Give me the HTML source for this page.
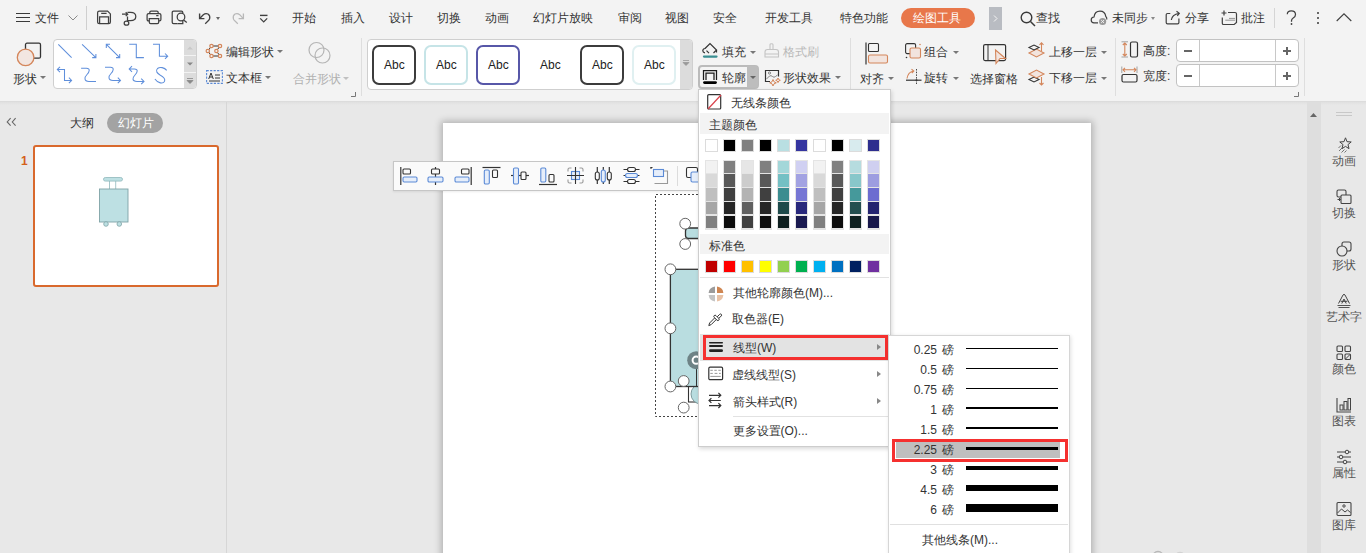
<!DOCTYPE html>
<html><head><meta charset="utf-8">
<style>
*{box-sizing:border-box;margin:0;padding:0}
html,body{width:1366px;height:553px;overflow:hidden;background:#e8e8e8;font-family:"Liberation Sans",sans-serif;color:#333;font-size:12px}
.a{position:absolute}
.t{position:absolute;white-space:nowrap;font-size:12px;line-height:14px}
svg{position:absolute;overflow:visible}
.dd{position:absolute;width:0;height:0;border-left:3px solid transparent;border-right:3px solid transparent;border-top:3px solid #777}
</style></head><body>
<!-- header -->
<div class="a" style="left:0;top:0;width:1366px;height:101px;background:#f3f3f3"></div>
<div class="a" style="left:0;top:101px;width:1366px;height:1px;background:#dcdcdc"></div>
<div class="a" style="left:0;top:102px;width:1366px;height:3px;background:linear-gradient(#e0e0e0,#e8e8e8)"></div>

<!-- hamburger -->
<div class="a" style="left:16px;top:13px;width:14px;height:1.4px;background:#3a3a3a"></div>
<div class="a" style="left:16px;top:17px;width:14px;height:1.4px;background:#3a3a3a"></div>
<div class="a" style="left:16px;top:21px;width:14px;height:1.4px;background:#3a3a3a"></div>
<div class="t" style="left:35px;top:11px;font-size:12px">文件</div>
<svg style="left:68px;top:15px" width="10" height="6"><path d="M0.5 0.5 L5 5 L9.5 0.5" fill="none" stroke="#8a8a8a" stroke-width="1"/></svg>
<div class="a" style="left:86px;top:6px;width:1px;height:24px;background:#cfcfcf"></div>
<!-- save -->
<svg style="left:96px;top:10px" width="16" height="15" viewBox="0 0 16 15"><path d="M1.6 2.8 Q1.6 1.1 3.3 1.1 L11.6 1.1 L14.4 3.9 L14.4 11.9 Q14.4 13.6 12.7 13.6 L3.3 13.6 Q1.6 13.6 1.6 11.9 Z M3.6 13.6 L3.6 6.8 L12.5 6.8 L12.5 13.6 M5.2 3.3 L10.6 3.3" fill="none" stroke="#404040" stroke-width="1.25"/></svg>
<!-- icon2 -->
<svg style="left:121px;top:10px" width="17" height="16" viewBox="0 0 17 16"><path d="M1 4.2 L6.5 4.2 M4.7 2.3 L6.7 4.2 L4.7 6.1 M6.5 2.3 L9.5 2.3 Q14.8 2.3 14.8 6.4 Q14.8 10.6 9.5 10.6 L6.5 10.6 M6.5 6.5 L6.5 11.5" fill="none" stroke="#404040" stroke-width="1.25"/><ellipse cx="5.5" cy="13.2" rx="2.3" ry="2" fill="none" stroke="#404040" stroke-width="1.25"/></svg>
<!-- print -->
<svg style="left:146px;top:10px" width="16" height="15" viewBox="0 0 16 15"><path d="M3.8 3.5 L3.8 2.5 Q3.8 1.1 5.2 1.1 L10.8 1.1 Q12.2 1.1 12.2 2.5 L12.2 3.5 M3.3 10.8 L2.5 10.8 Q1.1 10.8 1.1 9.4 L1.1 5 Q1.1 3.5 2.6 3.5 L13.4 3.5 Q14.9 3.5 14.9 5 L14.9 9.4 Q14.9 10.8 13.5 10.8 L12.7 10.8 M3.3 8.5 L12.7 8.5 L12.7 12.2 Q12.7 13.6 11.3 13.6 L4.7 13.6 Q3.3 13.6 3.3 12.2 Z M10.2 5.6 L12.5 5.6" fill="none" stroke="#404040" stroke-width="1.25"/></svg>
<!-- preview -->
<svg style="left:171px;top:10px" width="17" height="15" viewBox="0 0 17 15"><path d="M6.5 13.6 L2.6 13.6 Q1.2 13.6 1.2 12.2 L1.2 2.5 Q1.2 1.1 2.6 1.1 L10.4 1.1 Q11.8 1.1 11.8 2.5 L11.8 3 M12.3 9.8 L15.8 12.6" fill="none" stroke="#404040" stroke-width="1.25"/><circle cx="10" cy="7" r="3.8" fill="#f3f3f3" stroke="#404040" stroke-width="1.25"/><path d="M6.5 13.6 L11.8 13.6 L11.8 11" fill="none" stroke="#404040" stroke-width="1.25"/></svg>
<!-- undo -->
<svg style="left:198px;top:12px" width="14" height="13" viewBox="0 0 14 13"><path d="M1.6 1.6 L1.6 6.6 L6.4 6.6" fill="none" stroke="#404040" stroke-width="1.4"/><path d="M1.9 6.3 L5.3 2.7 Q7.5 0.9 10 2 Q12.4 3.5 11.6 6.8 Q11.3 7.8 10 9 L7.2 11.7" fill="none" stroke="#404040" stroke-width="1.3"/></svg>
<div class="a" style="left:215.5px;top:17px;width:0;height:0;border-left:2.8px solid transparent;border-right:2.8px solid transparent;border-top:3.2px solid #666"></div>
<svg style="left:231px;top:12px" width="14" height="13" viewBox="0 0 14 13"><path d="M12.4 1.6 L12.4 6.6 L7.6 6.6" fill="none" stroke="#b8b8b8" stroke-width="1.3"/><path d="M12.1 6.3 L8.7 2.7 Q6.5 0.9 4 2 Q1.6 3.5 2.4 6.8 Q2.7 7.8 4 9 L6.8 11.7" fill="none" stroke="#b8b8b8" stroke-width="1.2"/></svg>
<svg style="left:259px;top:14px" width="10" height="9" viewBox="0 0 10 9"><path d="M1 1.4 L8.5 1.4" stroke="#404040" stroke-width="1.4"/><path d="M1.2 4.4 L4.7 7.9 L8.2 4.4" fill="none" stroke="#404040" stroke-width="1.3"/></svg>
<div class="t" style="left:292px;top:11px">开始</div>
<div class="t" style="left:341px;top:11px">插入</div>
<div class="t" style="left:389px;top:11px">设计</div>
<div class="t" style="left:437px;top:11px">切换</div>
<div class="t" style="left:485px;top:11px">动画</div>
<div class="t" style="left:533px;top:11px">幻灯片放映</div>
<div class="t" style="left:617.5px;top:11px">审阅</div>
<div class="t" style="left:665px;top:11px">视图</div>
<div class="t" style="left:713px;top:11px">安全</div>
<div class="t" style="left:765px;top:11px">开发工具</div>
<div class="t" style="left:839.5px;top:11px">特色功能</div>
<div class="a" style="left:901px;top:8px;width:74px;height:20px;border-radius:10px;background:#e8774a"></div>
<div class="t" style="left:913px;top:11px;color:#fff">绘图工具</div>
<div class="a" style="left:989px;top:7px;width:13px;height:23px;background:#b9bcc2"></div>
<svg style="left:993px;top:15px" width="5" height="7"><path d="M1 0.5 L4 3.5 L1 6.5" fill="none" stroke="#f5f5f5" stroke-width="1"/></svg>
<!-- right side -->
<svg style="left:1020px;top:11px" width="16" height="16" viewBox="0 0 16 16"><circle cx="6.5" cy="6.5" r="5.3" fill="none" stroke="#3a3a3a" stroke-width="1.4"/><path d="M10.5 10.5 L15 15" stroke="#3a3a3a" stroke-width="1.5"/></svg>
<div class="t" style="left:1036px;top:11px">查找</div>
<svg style="left:1090px;top:10px" width="18" height="16" viewBox="0 0 18 16"><path d="M8 12.8 L4 12.8 Q1.2 12.8 1.2 10 Q1.2 7.2 4 7 Q4.8 1.2 10 1.2 Q15 1.2 15.8 6.5 Q17 7.5 16.8 9.5" fill="none" stroke="#404040" stroke-width="1.2"/><circle cx="12.6" cy="11.5" r="3.6" fill="#9a9a9a"/><path d="M11.2 10.1 L14 12.9 M14 10.1 L11.2 12.9" stroke="#f3f3f3" stroke-width="1"/></svg>
<div class="t" style="left:1111.5px;top:11px">未同步</div>
<div class="dd" style="left:1151px;top:17px;border-top-color:#888;border-left-width:2.7px;border-right-width:2.7px"></div>
<svg style="left:1165px;top:10px" width="16" height="15" viewBox="0 0 16 15"><path d="M5.3 3.5 L2.5 3.5 Q1.2 3.5 1.2 4.8 L1.2 12.5 Q1.2 13.8 2.5 13.8 L12.6 13.8 Q13.9 13.8 13.9 12.5 L13.9 8.5 M6.3 10 Q7 4.5 14 3.3 M11.5 1.2 L14.3 3.3 L12.3 6" fill="none" stroke="#404040" stroke-width="1.2"/></svg>
<div class="t" style="left:1185px;top:11px">分享</div>
<svg style="left:1221px;top:10px" width="17" height="16" viewBox="0 0 17 16"><path d="M7 2.5 L14 2.5 Q15.5 2.5 15.5 4 L15.5 12.5 L13.2 14.5 L2.5 14.5 Q1.3 14.5 1.3 13.2 L1.3 7.5 M3 0.5 L3 5.5 M0.5 3 L5.5 3" fill="none" stroke="#404040" stroke-width="1.2"/><path d="M8 8.4 L14 8.4 M4.3 10.2 L14 10.2" stroke="#888" stroke-width="0.9"/></svg>
<div class="t" style="left:1241px;top:11px">批注</div>
<div class="a" style="left:1274px;top:8px;width:1px;height:20px;background:#d5d5d5"></div>
<svg style="left:1286px;top:10px" width="11" height="16" viewBox="0 0 11 16"><path d="M1.3 4.3 Q1.3 0.9 5.3 0.9 Q9.5 0.9 9.5 4.5 Q9.5 6.8 7.2 8 Q5.5 9 5.5 10.8 L5.5 11.8" fill="none" stroke="#404040" stroke-width="1.25"/><circle cx="5.5" cy="14" r="0.9" fill="#404040"/></svg>
<div class="a" style="left:1317px;top:12px;width:2px;height:2px;background:#3a3a3a;border-radius:1px"></div>
<div class="a" style="left:1317px;top:17px;width:2px;height:2px;background:#3a3a3a;border-radius:1px"></div>
<div class="a" style="left:1317px;top:22px;width:2px;height:2px;background:#3a3a3a;border-radius:1px"></div>
<svg style="left:1336px;top:13px" width="16" height="9"><path d="M0.7 8 L8 0.9 L15.3 8" fill="none" stroke="#404040" stroke-width="1.15"/></svg>

<!-- shape button -->
<svg style="left:16px;top:42px" width="26" height="26" viewBox="0 0 26 26"><rect x="9.5" y="1.2" width="15" height="15" rx="1.5" fill="#f3f3f3" stroke="#333" stroke-width="1.3"/><circle cx="9.6" cy="15.4" r="8.3" fill="#f2e6e1" stroke="#d4865b" stroke-width="1.3"/></svg>
<div class="t" style="left:12.5px;top:72px">形状</div>
<div class="dd" style="left:40px;top:76px"></div>
<!-- line gallery -->
<div class="a" style="left:53px;top:39px;width:144px;height:50px;border:1px solid #cfcfcf;border-radius:4px;background:#fff"></div>
<div class="a" style="left:184px;top:40px;width:12px;height:48px;background:#dcdcdc;border-radius:0 3px 3px 0"></div>
<div class="a" style="left:184px;top:55px;width:12px;height:1px;background:#f3f3f3"></div>
<div class="a" style="left:184px;top:72px;width:12px;height:1px;background:#f3f3f3"></div>
<svg style="left:187px;top:46px" width="6" height="4"><path d="M0 3.5 L3 0.5 L6 3.5Z" fill="#c8c8c8"/></svg>
<svg style="left:187px;top:62px" width="6" height="4"><path d="M0 0.5 L3 3.5 L6 0.5Z" fill="#888"/></svg>
<svg style="left:187px;top:78px" width="6" height="6"><path d="M0 0.5 L6 0.5 M0 2.5 L3 5.5 L6 2.5Z" fill="#888" stroke="#888" stroke-width="0.8"/></svg>
<svg style="left:56px;top:43px" width="120" height="44" viewBox="0 0 120 44" fill="none" stroke="#5f8fdb" stroke-width="1.05">
<path d="M2.3 1.3 L15.6 14.6"/>
<path d="M26.1 1.3 L39.9 14.6 M36.2 14.6 L39.9 14.6 L39.9 10.9"/>
<path d="M50.3 1.3 L63.7 14.6 M50.3 5 L50.3 1.3 L54 1.3 M60 14.6 L63.7 14.6 L63.7 10.9"/>
<path d="M73.2 1.3 L80.3 1.3 L80.3 14.6 L87.9 14.6"/>
<path d="M97 1.3 L103.4 1.3 L103.4 13.2 L111.7 13.2 M109 10.5 L111.7 13.2 L109 15.9"/>
<path d="M1.3 26.5 L8.5 26.5 L8.5 37.4 L15.6 37.4 M4 23.8 L1.3 26.5 L4 29.2 M12.9 34.7 L15.6 37.4 L12.9 40.1"/>
<path d="M25.1 25.3 L30.5 25.3 C34.5 25.3 33.5 29 31 31.5 C28.5 34 27.5 38.4 33 38.4 L40 38.4"/>
<path d="M49 24.3 L54.5 24.3 C58.5 24.3 57.5 28 55 30.5 C52.5 33 51.5 37.4 57 37.4 L64.5 37.4 M61.8 34.7 L64.5 37.4 L61.8 40.1"/>
<path d="M73.2 26 L78.5 26 C82.5 26 81.5 29.5 79 32 C76.5 34.5 75.5 38.4 81 38.4 L88 38.4 M76 23.2 L73.2 26 L76 28.8 M85.2 35.6 L88 38.4 L85.2 41.2"/>
<path d="M110.7 27.4 C108.5 24.5 104 23.5 101.5 25.5 C99 28 101.5 30.5 104 32 C108 34 109.5 36 108.5 38.5 C107 41 102 40.5 98.9 36"/>
</svg>
<!-- edit shape / textbox / merge -->
<svg style="left:206px;top:44px" width="17" height="14" viewBox="0 0 17 14"><path d="M5.5 2 L14 2 L10.4 7 L14 12 L5.5 12 L1.8 7 Z" fill="none" stroke="#333" stroke-width="1"/><g fill="#f3f3f3" stroke="#d4865b" stroke-width="1.2"><circle cx="5.5" cy="2" r="1.7"/><circle cx="14" cy="2" r="1.7"/><circle cx="1.8" cy="7" r="1.7"/><circle cx="10.4" cy="7" r="1.7"/><circle cx="5.5" cy="12" r="1.7"/><circle cx="14" cy="12" r="1.7"/></g></svg>
<div class="t" style="left:226px;top:45px">编辑形状</div>
<div class="dd" style="left:277px;top:50px"></div>
<svg style="left:206px;top:70px" width="17" height="14" viewBox="0 0 17 14"><rect x="0.6" y="0.6" width="15.8" height="12.8" fill="none" stroke="#5b8ad6" stroke-width="1.1" stroke-dasharray="2.2 1.3"/><path d="M2.7 9 L5 3 L7.3 9 M3.5 7 L6.5 7 M9 5 L14 5 M9 8 L14 8 M3 11 L14 11" fill="none" stroke="#333" stroke-width="1"/></svg>
<div class="t" style="left:226px;top:71px">文本框</div>
<div class="dd" style="left:265px;top:76px"></div>
<svg style="left:308px;top:41px" width="24" height="24" viewBox="0 0 24 24"><circle cx="8.5" cy="9" r="7.5" fill="none" stroke="#b5b5b5" stroke-width="1.2"/><circle cx="14.5" cy="14.5" r="7.5" fill="none" stroke="#b5b5b5" stroke-width="1.2"/></svg>
<div class="t" style="left:293px;top:72px;color:#b0b0b0">合并形状</div>
<div class="dd" style="left:343px;top:77px;border-top-color:#c0c0c0"></div>
<svg style="left:351px;top:92px" width="5" height="5"><path d="M4.5 0 L4.5 4.5 L0 4.5" fill="none" stroke="#777" stroke-width="1"/></svg>
<div class="a" style="left:361px;top:38px;width:1px;height:58px;background:#dedede"></div>
<!-- style gallery -->
<div class="a" style="left:367px;top:39px;width:326px;height:51px;border:1px solid #cfcfcf;border-radius:4px;background:#fff"></div>
<div class="a" style="left:680px;top:40px;width:12px;height:49px;background:#dcdcdc;border-radius:0 3px 3px 0"></div>
<svg style="left:683px;top:60px" width="6" height="6"><path d="M0 0.5 L6 0.5 M0 2.5 L3 5.5 L6 2.5Z" fill="#999" stroke="#999" stroke-width="0.8"/></svg>
<div class="a" style="left:372px;top:45px;width:44px;height:40px;border:2.2px solid #3c3c3c;border-radius:7px"></div>
<div class="a" style="left:424px;top:45px;width:44px;height:40px;border:2px solid #c6e4e7;border-radius:7px"></div>
<div class="a" style="left:476px;top:45px;width:44px;height:40px;border:2px solid #5757a8;border-radius:7px"></div>
<div class="a" style="left:580px;top:45px;width:44px;height:40px;border:2.2px solid #3c3c3c;border-radius:7px"></div>
<div class="a" style="left:632px;top:45px;width:44px;height:40px;border:2px solid #e0f0f1;border-radius:7px"></div>
<div class="t" style="left:384px;top:58px;font-size:12px;color:#222">Abc</div>
<div class="t" style="left:436px;top:58px;font-size:12px;color:#222">Abc</div>
<div class="t" style="left:488px;top:58px;font-size:12px;color:#222">Abc</div>
<div class="t" style="left:540px;top:58px;font-size:12px;color:#222">Abc</div>
<div class="t" style="left:592px;top:58px;font-size:12px;color:#222">Abc</div>
<div class="t" style="left:644px;top:58px;font-size:12px;color:#222">Abc</div>
<!-- fill / format / outline / effect -->
<svg style="left:701px;top:42px" width="18" height="17" viewBox="0 0 18 17"><path d="M4 6.5 L9 1.5 L15.5 8 L12.5 11 M4 6.5 Q1.8 6.8 1.8 8.8 Q1.8 10.5 4 10.8 M8 11.2 L5.5 8.7" fill="none" stroke="#333" stroke-width="1.2"/><path d="M15.5 8 L15.5 10.5" stroke="#333" stroke-width="1.2"/><path d="M3 14.6 L15.5 14.6" stroke="#3a8f92" stroke-width="2.3" stroke-linecap="round"/></svg>
<div class="t" style="left:722px;top:45px">填充</div>
<div class="dd" style="left:750px;top:51px"></div>
<svg style="left:764px;top:43px" width="16" height="15" viewBox="0 0 16 15"><path d="M6 6 L6 1.5 Q6 0.8 7.5 0.8 Q9 0.8 9 1.5 L9 6 M1 14 L1 9 Q1 6.5 3.5 6.5 L12 6.5 Q14.5 6.5 14.5 9 L14.5 14 Z M1 11 L14.5 11" fill="none" stroke="#c4c4c4" stroke-width="1.1"/></svg>
<div class="t" style="left:783px;top:45px;color:#b8b8b8">格式刷</div>
<div class="a" style="left:698px;top:65px;width:61px;height:24px;border:2px solid #bbbbbb;border-radius:4px;background:#f4f4f4"></div>
<div class="a" style="left:747px;top:66px;width:11px;height:22px;background:#bdbdbd;border-radius:0 3px 3px 0"></div>
<div class="dd" style="left:749.5px;top:76px;border-top-color:#666;border-left-width:3.2px;border-right-width:3.2px;border-top-width:3.5px"></div>
<svg style="left:702px;top:69px" width="16" height="16" viewBox="0 0 16 16"><path d="M1.5 11 L1.5 1.5 L14.5 1.5 L14.5 11 M4 11 L4 4 L12 4 L12 11" fill="none" stroke="#1a1a1a" stroke-width="1.25"/><path d="M2.5 13.6 L13.5 13.6" stroke="#000" stroke-width="2.8" stroke-linecap="round"/></svg>
<div class="t" style="left:722px;top:71px">轮廓</div>
<svg style="left:764px;top:69px" width="17" height="16" viewBox="0 0 17 16"><path d="M6 12.5 L1.5 12.5 L1.5 1.5 L14.5 1.5 L14.5 7.5" fill="none" stroke="#333" stroke-width="1.2"/><path d="M2.5 10 L5.5 7 Q7 6 8.5 7.5 Q10 9 11.5 7.5 L13.5 6" fill="none" stroke="#777" stroke-width="0.9"/><circle cx="5.5" cy="4" r="1.1" fill="none" stroke="#777" stroke-width="0.9"/><path d="M9 10.5 L10 12.8 L12.3 13.8 L10 14.8 L9 17 L8 14.8 L5.7 13.8 L8 12.8Z M14 9 L14.7 10.6 L16.3 11.3 L14.7 12 L14 13.6 L13.3 12 L11.7 11.3 L13.3 10.6Z" fill="#f3f3f3" stroke="#d4865b" stroke-width="1"/></svg>
<div class="t" style="left:783px;top:71px">形状效果</div>
<div class="dd" style="left:835px;top:76px"></div>
<div class="a" style="left:850px;top:38px;width:1px;height:58px;background:#dedede"></div>
<!-- align etc -->
<svg style="left:865px;top:42px" width="24" height="23" viewBox="0 0 24 23"><path d="M1 0.5 L1 22.5" stroke="#333" stroke-width="1.2"/><rect x="3.5" y="1.5" width="10" height="8" rx="1" fill="none" stroke="#333" stroke-width="1.1"/><rect x="3.5" y="13" width="19" height="8" rx="1.5" fill="#f2e4de" stroke="#d4865b" stroke-width="1.1"/></svg>
<div class="t" style="left:860px;top:72px">对齐</div>
<div class="dd" style="left:888px;top:77px"></div>
<svg style="left:905px;top:43px" width="17" height="16" viewBox="0 0 17 16"><rect x="0.6" y="0.6" width="10" height="10" rx="1.5" fill="none" stroke="#333" stroke-width="1.1"/><rect x="5" y="5" width="10.5" height="10" rx="1.5" fill="#f2e4de" stroke="#d4865b" stroke-width="1.1"/><circle cx="15" cy="1.5" r="0.8" fill="#d4865b"/><circle cx="1.5" cy="14.5" r="0.8" fill="#333"/></svg>
<div class="t" style="left:924px;top:45px">组合</div>
<div class="dd" style="left:953px;top:51px"></div>
<svg style="left:905px;top:69px" width="17" height="16" viewBox="0 0 17 16"><path d="M1 11.2 L16.5 11.2" stroke="#333" stroke-width="1.2"/><path d="M11.5 0 L11.5 15.5" stroke="#333" stroke-width="0.9" stroke-dasharray="1.5 1.2"/><path d="M2 9.5 Q3 3 8.5 2 M6.5 0.3 L8.8 2 L6.8 4" fill="none" stroke="#d4865b" stroke-width="1.1"/><circle cx="11.5" cy="11.2" r="1" fill="#333"/></svg>
<div class="t" style="left:924px;top:71px">旋转</div>
<div class="dd" style="left:953px;top:77px"></div>
<svg style="left:983px;top:44px" width="25" height="22" viewBox="0 0 25 22"><rect x="0.6" y="0.6" width="22" height="16" rx="1.5" fill="none" stroke="#333" stroke-width="1.2"/><path d="M5 0.6 L5 16.6" stroke="#333" stroke-width="1"/><path d="M12.5 6 L22.5 14.5 L17 14.5 L13 19.5 Z" fill="#f2e4de" stroke="#d4865b" stroke-width="1.1"/></svg>
<div class="t" style="left:970px;top:72px">选择窗格</div>
<svg style="left:1028px;top:42px" width="18" height="18" viewBox="0 0 18 18"><path d="M1 11 L8.5 7 L16 11 L8.5 15 Z" fill="#f2e4de" stroke="#d4865b" stroke-width="1.1"/><path d="M1 5.5 L6 3 L11 5.5 L6 8 Z" fill="#f3f3f3" stroke="#333" stroke-width="1.1"/><path d="M13.5 9 L13.5 0.8 M11.5 2.8 L13.5 0.8 L15.5 2.8" fill="none" stroke="#d4865b" stroke-width="1.1"/></svg>
<div class="t" style="left:1049px;top:45px">上移一层</div>
<div class="dd" style="left:1101px;top:51px"></div>
<svg style="left:1028px;top:68px" width="18" height="18" viewBox="0 0 18 18"><path d="M1 11.5 L6 9 L11 11.5 L6 14 Z" fill="#f3f3f3" stroke="#333" stroke-width="1.1"/><path d="M1 6 L8.5 2 L16 6 L8.5 10 Z" fill="#f2e4de" stroke="#d4865b" stroke-width="1.1"/><path d="M13.5 9 L13.5 17 M11.5 15 L13.5 17 L15.5 15" fill="none" stroke="#d4865b" stroke-width="1.1"/></svg>
<div class="t" style="left:1049px;top:71px">下移一层</div>
<div class="dd" style="left:1101px;top:77px"></div>
<div class="a" style="left:1115px;top:38px;width:1px;height:58px;background:#dedede"></div>
<svg style="left:1120.5px;top:41px" width="18" height="17" viewBox="0 0 18 17"><path d="M0.5 0.8 L7 0.8 M0.5 16 L7 16" stroke="#999" stroke-width="0.9"/><path d="M3.8 2 L3.8 15 M1.8 4 L3.8 2 L5.8 4 M1.8 13 L3.8 15 L5.8 13" fill="none" stroke="#d4865b" stroke-width="1.1"/><rect x="9.5" y="1" width="7" height="15" rx="1.5" fill="none" stroke="#333" stroke-width="1.2"/></svg>
<div class="t" style="left:1143px;top:44px">高度:</div>
<svg style="left:1120.5px;top:66px" width="18" height="17" viewBox="0 0 18 17"><path d="M0.8 0.5 L0.8 7 M16 0.5 L16 7" stroke="#999" stroke-width="0.9"/><path d="M2 3.8 L15 3.8 M4 1.8 L2 3.8 L4 5.8 M13 1.8 L15 3.8 L13 5.8" fill="none" stroke="#d4865b" stroke-width="1.1"/><rect x="1" y="8.5" width="15" height="7.5" rx="1.5" fill="none" stroke="#333" stroke-width="1.2"/></svg>
<div class="t" style="left:1143px;top:69px">宽度:</div>
<div class="a" style="left:1176px;top:39px;width:123px;height:23px;border:1px solid #c2c2c2;border-radius:4px;background:#fff"></div>
<div class="a" style="left:1199px;top:40px;width:1px;height:21px;background:#c8c8c8"></div>
<div class="a" style="left:1275px;top:40px;width:1px;height:21px;background:#c8c8c8"></div>
<div class="a" style="left:1176px;top:64px;width:123px;height:23px;border:1px solid #c2c2c2;border-radius:4px;background:#fff"></div>
<div class="a" style="left:1199px;top:65px;width:1px;height:21px;background:#c8c8c8"></div>
<div class="a" style="left:1275px;top:65px;width:1px;height:21px;background:#c8c8c8"></div>
<div class="a" style="left:1184px;top:50px;width:8px;height:1.6px;background:#666"></div>
<div class="a" style="left:1184px;top:75px;width:8px;height:1.6px;background:#666"></div>
<div class="a" style="left:1283px;top:50px;width:8px;height:1.6px;background:#666"></div>
<div class="a" style="left:1286.2px;top:46.8px;width:1.6px;height:8px;background:#666"></div>
<div class="a" style="left:1283px;top:75px;width:8px;height:1.6px;background:#666"></div>
<div class="a" style="left:1286.2px;top:71.8px;width:1.6px;height:8px;background:#666"></div>
<svg style="left:1294px;top:92px" width="5" height="5"><path d="M4.5 0 L4.5 4.5 L0 4.5" fill="none" stroke="#777" stroke-width="1"/></svg>
<div class="a" style="left:1304px;top:38px;width:1px;height:58px;background:#dedede"></div>

<div class="a" style="left:226px;top:102px;width:1px;height:451px;background:#d6d6d6"></div>
<svg style="left:5px;top:116px" width="14" height="12" viewBox="0 0 14 12"><path d="M5.6 2.1 L2.2 6 L5.6 9.6 M10.6 2.1 L7.3 6 L10.6 9.6" fill="none" stroke="#666" stroke-width="1.1"/></svg>
<div class="t" style="left:70px;top:116px">大纲</div>
<div class="a" style="left:107px;top:113px;width:56px;height:20px;border-radius:10px;background:#a3a3a3"></div>
<div class="t" style="left:117.5px;top:116px;color:#fff">幻灯片</div>
<div class="t" style="left:21px;top:154px;color:#d4601a;font-weight:bold;font-size:12px">1</div>
<div class="a" style="left:33px;top:145px;width:186px;height:142px;border:2px solid #d9692d;border-radius:3px;background:#fff"></div>
<svg style="left:95px;top:175px" width="36" height="54" viewBox="0 0 36 54">
<rect x="8.5" y="2.5" width="19" height="3.6" rx="1.8" fill="#bde0e3" stroke="#8fb8bb" stroke-width="0.8"/>
<path d="M14.5 6 L14.5 14 M20.7 6 L20.7 14" stroke="#8fb8bb" stroke-width="0.8"/>
<rect x="4.5" y="14" width="28.5" height="33" fill="#bde0e3" stroke="#7fa3a6" stroke-width="0.9"/>
<circle cx="11" cy="49" r="2.3" fill="#bde0e3" stroke="#7fa3a6" stroke-width="0.8"/>
<circle cx="24.3" cy="49" r="2.3" fill="#bde0e3" stroke="#7fa3a6" stroke-width="0.8"/>
</svg>

<div class="a" style="left:443px;top:123px;width:648px;height:440px;background:#fff;box-shadow:0 0 7px 2px rgba(0,0,0,0.24)"></div>
<div class="a" style="left:1307px;top:102px;width:14px;height:451px;background:#dedede"></div>
<svg style="left:1310px;top:113px" width="7" height="4"><path d="M0 4 L3.5 0 L7 4Z" fill="#666"/></svg>

<div class="a" style="left:1336px;top:112px;width:16px;height:1px;background:#c8c8c8"></div>
<div class="a" style="left:1336px;top:115px;width:16px;height:1px;background:#c8c8c8"></div>
<svg style="left:1336px;top:137px" width="17" height="17" viewBox="0 0 17 17"><path d="M9.50 0.80 L11.03 4.70 L15.21 4.95 L11.97 7.60 L13.03 11.65 L9.50 9.40 L5.97 11.65 L7.03 7.60 L3.79 4.95 L7.97 4.70 Z" fill="#e8e8e8" stroke="#444" stroke-width="1"/><path d="M2.5 11 L5 8.5 M3 14 L6.5 10.5 M5.5 15.5 L8.5 12.5 M8.5 15.5 L10.5 13.5" stroke="#666" stroke-width="0.9"/></svg>
<div class="t" style="left:1332px;top:154px;color:#555">动画</div>
<svg style="left:1336px;top:189px" width="16" height="16" viewBox="0 0 16 16"><rect x="1" y="1" width="9" height="7" rx="1.5" fill="none" stroke="#444" stroke-width="1.1"/><rect x="5" y="6" width="10" height="8.5" rx="1" fill="#e8e8e8" stroke="#444" stroke-width="1.1"/><path d="M1.5 10.5 L4.5 10.5 M3 9 L4.5 10.5 L3 12" fill="none" stroke="#444" stroke-width="1"/></svg>
<div class="t" style="left:1332px;top:206px;color:#555">切换</div>
<svg style="left:1336px;top:241px" width="16" height="16" viewBox="0 0 16 16"><rect x="6" y="1" width="9" height="9" rx="2" fill="none" stroke="#444" stroke-width="1.1"/><circle cx="6" cy="10" r="5" fill="#e8e8e8" stroke="#444" stroke-width="1.1"/></svg>
<div class="t" style="left:1332px;top:258px;color:#555">形状</div>
<svg style="left:1336px;top:293px" width="16" height="16" viewBox="0 0 16 16"><path d="M2.5 10.5 L7 2 Q8 0.5 9 2 L13.5 10.5 M5.8 10.5 L8 6 L10.2 10.5 M4.6 8.3 L11.4 8.3" fill="none" stroke="#444" stroke-width="1"/><path d="M1.5 12.5 L14.5 12.5 M2.5 14.5 L13.5 14.5" stroke="#444" stroke-width="0.9"/></svg>
<div class="t" style="left:1326px;top:310px;color:#555">艺术字</div>
<svg style="left:1336px;top:345px" width="16" height="16" viewBox="0 0 16 16"><rect x="1" y="1" width="5.5" height="5.5" rx="1" fill="none" stroke="#444" stroke-width="1.1"/><rect x="9" y="1" width="5.5" height="5.5" rx="1" fill="none" stroke="#444" stroke-width="1.1"/><rect x="1" y="9" width="5.5" height="5.5" rx="1" fill="none" stroke="#444" stroke-width="1.1"/><rect x="9" y="9" width="5.5" height="5.5" rx="1" fill="none" stroke="#444" stroke-width="1.1"/><path d="M9.5 14 L14 9.5" stroke="#444" stroke-width="1"/></svg>
<div class="t" style="left:1332px;top:362px;color:#555">颜色</div>
<svg style="left:1336px;top:397px" width="16" height="16" viewBox="0 0 16 16"><path d="M1 1 L1 15 L15 15" fill="none" stroke="#444" stroke-width="1.1"/><rect x="4" y="8" width="3" height="5" fill="none" stroke="#444" stroke-width="1"/><rect x="8" y="4.5" width="3" height="8.5" fill="none" stroke="#444" stroke-width="1"/><rect x="12" y="1.5" width="2.5" height="11.5" fill="none" stroke="#444" stroke-width="1"/></svg>
<div class="t" style="left:1332px;top:414px;color:#555">图表</div>
<svg style="left:1336px;top:449px" width="16" height="16" viewBox="0 0 16 16"><path d="M1 3 L15 3 M1 8 L15 8 M1 13 L15 13" stroke="#444" stroke-width="1"/><circle cx="11" cy="3" r="1.8" fill="#e8e8e8" stroke="#444" stroke-width="1"/><circle cx="5" cy="8" r="1.8" fill="#e8e8e8" stroke="#444" stroke-width="1"/><circle cx="9" cy="13" r="1.8" fill="#e8e8e8" stroke="#444" stroke-width="1"/></svg>
<div class="t" style="left:1332px;top:466px;color:#555">属性</div>
<svg style="left:1336px;top:501px" width="16" height="16" viewBox="0 0 16 16"><rect x="1" y="1.5" width="14" height="13" rx="1" fill="none" stroke="#444" stroke-width="1.1"/><path d="M1.5 12 L5.5 8 L9 11 L11.5 9 L14.5 11.5" fill="none" stroke="#444" stroke-width="1"/><circle cx="8" cy="5" r="1.2" fill="none" stroke="#444" stroke-width="1"/></svg>
<div class="t" style="left:1332px;top:518px;color:#555">图库</div>

<svg style="left:1145px;top:545px" width="50" height="8"><circle cx="13" cy="12" r="5.5" fill="none" stroke="#b8b8b8" stroke-width="1.3"/><circle cx="35" cy="13" r="5.5" fill="none" stroke="#d2d2d2" stroke-width="1.3"/></svg>
<div class="a" style="left:393px;top:161px;width:320px;height:30px;border:1px solid #c6c6c6;background:#fafafa;box-shadow:0 1px 2px rgba(0,0,0,0.08)"></div>
<svg style="left:393px;top:161px" width="320" height="30" viewBox="0 0 320 30" fill="none" stroke-width="1.1">
<!-- 1 align left: x 400-417 -->
<g transform="translate(7,6)"><path d="M0.8 0 L0.8 18" stroke="#333" stroke-width="1.2"/><rect x="3" y="2" width="7.5" height="5" rx="1" stroke="#333"/><rect x="3" y="10" width="14" height="5" rx="1.2" fill="#e6eefa" stroke="#5b8ad6"/></g>
<!-- 2 align center: 427-444 -->
<g transform="translate(34,6)"><path d="M8.5 0 L8.5 18" stroke="#333" stroke-width="1.2"/><rect x="4.5" y="2" width="8" height="5" rx="1" fill="#fafafa" stroke="#333"/><rect x="1" y="10" width="15" height="5" rx="1.2" fill="#e6eefa" stroke="#5b8ad6"/></g>
<!-- 3 align right: 455-472 -->
<g transform="translate(62,6)"><path d="M16.2 0 L16.2 18" stroke="#333" stroke-width="1.2"/><rect x="6.5" y="2" width="7.5" height="5" rx="1" stroke="#333"/><rect x="0" y="10" width="14" height="5" rx="1.2" fill="#e6eefa" stroke="#5b8ad6"/></g>
<!-- 4 align top: 482.6-501 -->
<g transform="translate(89.5,6)"><path d="M0 0.5 L18 0.5" stroke="#333" stroke-width="1.2"/><rect x="1.8" y="3" width="5" height="14" rx="1.2" fill="#e6eefa" stroke="#5b8ad6"/><rect x="10" y="3" width="5" height="7.5" rx="1" stroke="#333"/></g>
<!-- 5 align middle: 511-529 -->
<g transform="translate(118,6)"><path d="M0 8.5 L18 8.5" stroke="#333" stroke-width="1.2"/><rect x="2.5" y="1" width="5" height="16" rx="1.2" fill="#e6eefa" stroke="#5b8ad6"/><rect x="10" y="5" width="5" height="7.5" rx="1" fill="#fafafa" stroke="#333"/></g>
<!-- 6 align bottom: 539-557 -->
<g transform="translate(146,6)"><path d="M0 17.5 L18 17.5" stroke="#333" stroke-width="1.2"/><rect x="1.8" y="1" width="5" height="14" rx="1.2" fill="#e6eefa" stroke="#5b8ad6"/><rect x="10" y="7.5" width="5" height="7.5" rx="1" stroke="#333"/></g>
<!-- 7 center both: 567-584 -->
<g transform="translate(174,6)"><path d="M1 4.5 L1 2.5 Q1 1 2.5 1 L4.5 1 M12.5 1 L14.5 1 Q16 1 16 2.5 L16 4.5 M16 12.5 L16 14.5 Q16 16 14.5 16 L12.5 16 M4.5 16 L2.5 16 Q1 16 1 14.5 L1 12.5" stroke="#999"/><rect x="4.5" y="4.5" width="8" height="8" fill="#e6eefa" stroke="#5b8ad6"/><path d="M8.5 0 L8.5 17 M0 8.5 L17 8.5" stroke="#333" stroke-width="1.1"/></g>
<!-- 8 distribute horiz: 594.6-612 -->
<g transform="translate(201.5,6)"><path d="M2.8 0 L2.8 17 M8.8 0 L8.8 17 M14.8 0 L14.8 17" stroke="#333" stroke-width="1.2"/><rect x="0.8" y="5" width="4" height="8" rx="2" fill="#fafafa" stroke="#333"/><rect x="6.8" y="3" width="4" height="12" rx="2" fill="#e6eefa" stroke="#5b8ad6"/><rect x="12.8" y="5" width="4" height="8" rx="2" fill="#fafafa" stroke="#333"/></g>
<!-- 9 distribute vert: 623.8-640 -->
<g transform="translate(230.5,6)"><path d="M0 2.5 L16 2.5 M0 8.5 L16 8.5 M0 14.5 L16 14.5" stroke="#333" stroke-width="1.2"/><rect x="4" y="0.5" width="8" height="4" rx="2" fill="#fafafa" stroke="#333"/><rect x="2" y="6.5" width="12" height="4" rx="2" fill="#e6eefa" stroke="#5b8ad6"/><rect x="4" y="12.5" width="8" height="4" rx="2" fill="#fafafa" stroke="#333"/></g>
<!-- 10 : 650.6-669 -->
<g transform="translate(257.5,6)"><path d="M0 0.5 L2 0.5 M0.5 0 L0.5 2" stroke="#333" stroke-width="1"/><path d="M4 4 L17 4 L17 16.5 L4 16.5" stroke="#999"/><rect x="3" y="2.5" width="10" height="7" fill="#e6eefa" stroke="#5b8ad6"/></g>
<path d="M284.5 5 L284.5 25" stroke="#dcdcdc" stroke-width="1"/>
<g transform="translate(293,6)"><rect x="0.5" y="0.5" width="11" height="10" rx="1.5" stroke="#333"/><rect x="5" y="5" width="10" height="10" rx="1.5" fill="#e6eefa" stroke="#5b8ad6"/></g>
</svg>

<svg style="left:655px;top:194px" width="60" height="224"><path d="M59 0.5 L0.5 0.5 L0.5 222.5 L59 222.5" fill="none" stroke="#444" stroke-width="1" stroke-dasharray="2 2"/></svg>
<svg style="left:640px;top:200px" width="70" height="220" viewBox="640 200 70 220">
<rect x="688.5" y="386.5" width="30" height="15.5" fill="#fff" stroke="#333" stroke-width="1.1"/>
<circle cx="701" cy="394" r="10" fill="#b9dde0" stroke="#7d9a9d" stroke-width="1"/>
<rect x="685.5" y="228" width="30" height="10.5" rx="3" fill="#b9dde0" stroke="#333" stroke-width="1.3"/>
<rect x="670.4" y="269.3" width="50" height="117.2" fill="#b9dde0" stroke="#333" stroke-width="1.3"/>
<path d="M696.5 360 L696.5 386.5" stroke="#333" stroke-width="1"/>
<circle cx="696.2" cy="360.2" r="9" fill="#6e8386"/>
<circle cx="696.2" cy="360.2" r="3.6" fill="none" stroke="#fff" stroke-width="2"/>
<g fill="#fff" stroke="#666" stroke-width="1">
<circle cx="685.2" cy="223.7" r="5.4"/>
<circle cx="685.2" cy="244" r="5.4"/>
<circle cx="670.4" cy="269.3" r="5.4"/>
<circle cx="670.4" cy="328.3" r="5.4"/>
<circle cx="670.4" cy="386.5" r="5.4"/>
<circle cx="683.7" cy="381" r="5.4"/>
<circle cx="683.7" cy="407.6" r="5.4"/>
</g>
</svg>

<div class="a" style="left:698px;top:89px;width:193px;height:358px;border:1px solid #cdcdcd;background:#fff;box-shadow:1px 2px 4px rgba(0,0,0,0.15)"></div>
<svg style="left:707px;top:94px" width="15" height="16" viewBox="0 0 15 16"><rect x="0.7" y="0.7" width="13" height="14.3" rx="1" fill="#fff" stroke="#333" stroke-width="1.2"/><path d="M1 15 L14 1" stroke="#d8404a" stroke-width="1.2"/></svg>
<div class="t" style="left:730.5px;top:96px">无线条颜色</div>
<div class="a" style="left:700px;top:113px;width:189px;height:21px;background:#f3f3f3"></div>
<div class="t" style="left:709px;top:118px">主题颜色</div>
<div class="a" style="left:704.5px;top:138.5px;width:13.5px;height:13.5px;background:#ffffff;border:1px solid #dcdcdc"></div>
<div class="a" style="left:722.5px;top:138.5px;width:13.5px;height:13.5px;background:#000000;border:1px solid #dcdcdc"></div>
<div class="a" style="left:740.5px;top:138.5px;width:13.5px;height:13.5px;background:#808080;border:1px solid #dcdcdc"></div>
<div class="a" style="left:758.5px;top:138.5px;width:13.5px;height:13.5px;background:#000000;border:1px solid #dcdcdc"></div>
<div class="a" style="left:776.5px;top:138.5px;width:13.5px;height:13.5px;background:#b9dfe2;border:1px solid #dcdcdc"></div>
<div class="a" style="left:794.5px;top:138.5px;width:13.5px;height:13.5px;background:#3535a0;border:1px solid #dcdcdc"></div>
<div class="a" style="left:812.5px;top:138.5px;width:13.5px;height:13.5px;background:#ffffff;border:1px solid #dcdcdc"></div>
<div class="a" style="left:830.5px;top:138.5px;width:13.5px;height:13.5px;background:#000000;border:1px solid #dcdcdc"></div>
<div class="a" style="left:848.5px;top:138.5px;width:13.5px;height:13.5px;background:#d8ebee;border:1px solid #dcdcdc"></div>
<div class="a" style="left:866.5px;top:138.5px;width:13.5px;height:13.5px;background:#2e2e8e;border:1px solid #dcdcdc"></div>
<div class="a" style="left:704.5px;top:159.5px;width:13.5px;height:70px;background:#e4e4e4"></div>
<div class="a" style="left:705.5px;top:160.5px;width:11.5px;height:12.5px;background:#f2f2f2"></div>
<div class="a" style="left:705.5px;top:174.3px;width:11.5px;height:12.5px;background:#d9d9d9"></div>
<div class="a" style="left:705.5px;top:188.1px;width:11.5px;height:12.5px;background:#bfbfbf"></div>
<div class="a" style="left:705.5px;top:201.9px;width:11.5px;height:12.5px;background:#a6a6a6"></div>
<div class="a" style="left:705.5px;top:215.7px;width:11.5px;height:12.5px;background:#808080"></div>
<div class="a" style="left:722.5px;top:159.5px;width:13.5px;height:70px;background:#e4e4e4"></div>
<div class="a" style="left:723.5px;top:160.5px;width:11.5px;height:12.5px;background:#808080"></div>
<div class="a" style="left:723.5px;top:174.3px;width:11.5px;height:12.5px;background:#595959"></div>
<div class="a" style="left:723.5px;top:188.1px;width:11.5px;height:12.5px;background:#404040"></div>
<div class="a" style="left:723.5px;top:201.9px;width:11.5px;height:12.5px;background:#262626"></div>
<div class="a" style="left:723.5px;top:215.7px;width:11.5px;height:12.5px;background:#0d0d0d"></div>
<div class="a" style="left:740.5px;top:159.5px;width:13.5px;height:70px;background:#e4e4e4"></div>
<div class="a" style="left:741.5px;top:160.5px;width:11.5px;height:12.5px;background:#e6e6e6"></div>
<div class="a" style="left:741.5px;top:174.3px;width:11.5px;height:12.5px;background:#cccccc"></div>
<div class="a" style="left:741.5px;top:188.1px;width:11.5px;height:12.5px;background:#b3b3b3"></div>
<div class="a" style="left:741.5px;top:201.9px;width:11.5px;height:12.5px;background:#606060"></div>
<div class="a" style="left:741.5px;top:215.7px;width:11.5px;height:12.5px;background:#404040"></div>
<div class="a" style="left:758.5px;top:159.5px;width:13.5px;height:70px;background:#e4e4e4"></div>
<div class="a" style="left:759.5px;top:160.5px;width:11.5px;height:12.5px;background:#808080"></div>
<div class="a" style="left:759.5px;top:174.3px;width:11.5px;height:12.5px;background:#595959"></div>
<div class="a" style="left:759.5px;top:188.1px;width:11.5px;height:12.5px;background:#404040"></div>
<div class="a" style="left:759.5px;top:201.9px;width:11.5px;height:12.5px;background:#262626"></div>
<div class="a" style="left:759.5px;top:215.7px;width:11.5px;height:12.5px;background:#0d0d0d"></div>
<div class="a" style="left:776.5px;top:159.5px;width:13.5px;height:70px;background:#e4e4e4"></div>
<div class="a" style="left:777.5px;top:160.5px;width:11.5px;height:12.5px;background:#a3d7d9"></div>
<div class="a" style="left:777.5px;top:174.3px;width:11.5px;height:12.5px;background:#74c0c4"></div>
<div class="a" style="left:777.5px;top:188.1px;width:11.5px;height:12.5px;background:#3b8d90"></div>
<div class="a" style="left:777.5px;top:201.9px;width:11.5px;height:12.5px;background:#1d4a4b"></div>
<div class="a" style="left:777.5px;top:215.7px;width:11.5px;height:12.5px;background:#0e1f1f"></div>
<div class="a" style="left:794.5px;top:159.5px;width:13.5px;height:70px;background:#e4e4e4"></div>
<div class="a" style="left:795.5px;top:160.5px;width:11.5px;height:12.5px;background:#d0d0f2"></div>
<div class="a" style="left:795.5px;top:174.3px;width:11.5px;height:12.5px;background:#a2a2e2"></div>
<div class="a" style="left:795.5px;top:188.1px;width:11.5px;height:12.5px;background:#7676d4"></div>
<div class="a" style="left:795.5px;top:201.9px;width:11.5px;height:12.5px;background:#28287c"></div>
<div class="a" style="left:795.5px;top:215.7px;width:11.5px;height:12.5px;background:#1a1a50"></div>
<div class="a" style="left:812.5px;top:159.5px;width:13.5px;height:70px;background:#e4e4e4"></div>
<div class="a" style="left:813.5px;top:160.5px;width:11.5px;height:12.5px;background:#f2f2f2"></div>
<div class="a" style="left:813.5px;top:174.3px;width:11.5px;height:12.5px;background:#d9d9d9"></div>
<div class="a" style="left:813.5px;top:188.1px;width:11.5px;height:12.5px;background:#bfbfbf"></div>
<div class="a" style="left:813.5px;top:201.9px;width:11.5px;height:12.5px;background:#a6a6a6"></div>
<div class="a" style="left:813.5px;top:215.7px;width:11.5px;height:12.5px;background:#808080"></div>
<div class="a" style="left:830.5px;top:159.5px;width:13.5px;height:70px;background:#e4e4e4"></div>
<div class="a" style="left:831.5px;top:160.5px;width:11.5px;height:12.5px;background:#808080"></div>
<div class="a" style="left:831.5px;top:174.3px;width:11.5px;height:12.5px;background:#595959"></div>
<div class="a" style="left:831.5px;top:188.1px;width:11.5px;height:12.5px;background:#404040"></div>
<div class="a" style="left:831.5px;top:201.9px;width:11.5px;height:12.5px;background:#262626"></div>
<div class="a" style="left:831.5px;top:215.7px;width:11.5px;height:12.5px;background:#0d0d0d"></div>
<div class="a" style="left:848.5px;top:159.5px;width:13.5px;height:70px;background:#e4e4e4"></div>
<div class="a" style="left:849.5px;top:160.5px;width:11.5px;height:12.5px;background:#b6dcdf"></div>
<div class="a" style="left:849.5px;top:174.3px;width:11.5px;height:12.5px;background:#88c7ca"></div>
<div class="a" style="left:849.5px;top:188.1px;width:11.5px;height:12.5px;background:#45999b"></div>
<div class="a" style="left:849.5px;top:201.9px;width:11.5px;height:12.5px;background:#234f50"></div>
<div class="a" style="left:849.5px;top:215.7px;width:11.5px;height:12.5px;background:#0f2121"></div>
<div class="a" style="left:866.5px;top:159.5px;width:13.5px;height:70px;background:#e4e4e4"></div>
<div class="a" style="left:867.5px;top:160.5px;width:11.5px;height:12.5px;background:#cfcff0"></div>
<div class="a" style="left:867.5px;top:174.3px;width:11.5px;height:12.5px;background:#9d9de0"></div>
<div class="a" style="left:867.5px;top:188.1px;width:11.5px;height:12.5px;background:#6c6cd0"></div>
<div class="a" style="left:867.5px;top:201.9px;width:11.5px;height:12.5px;background:#232370"></div>
<div class="a" style="left:867.5px;top:215.7px;width:11.5px;height:12.5px;background:#17174a"></div>
<div class="a" style="left:700px;top:234px;width:189px;height:20px;background:#f3f3f3"></div>
<div class="t" style="left:709px;top:239px">标准色</div>
<div class="a" style="left:704.5px;top:259.5px;width:13.5px;height:13.5px;background:#c00000;border:1px solid #dcdcdc"></div>
<div class="a" style="left:722.5px;top:259.5px;width:13.5px;height:13.5px;background:#ff0000;border:1px solid #dcdcdc"></div>
<div class="a" style="left:740.5px;top:259.5px;width:13.5px;height:13.5px;background:#ffc000;border:1px solid #dcdcdc"></div>
<div class="a" style="left:758.5px;top:259.5px;width:13.5px;height:13.5px;background:#ffff00;border:1px solid #dcdcdc"></div>
<div class="a" style="left:776.5px;top:259.5px;width:13.5px;height:13.5px;background:#92d050;border:1px solid #dcdcdc"></div>
<div class="a" style="left:794.5px;top:259.5px;width:13.5px;height:13.5px;background:#00b050;border:1px solid #dcdcdc"></div>
<div class="a" style="left:812.5px;top:259.5px;width:13.5px;height:13.5px;background:#00b0f0;border:1px solid #dcdcdc"></div>
<div class="a" style="left:830.5px;top:259.5px;width:13.5px;height:13.5px;background:#0070c0;border:1px solid #dcdcdc"></div>
<div class="a" style="left:848.5px;top:259.5px;width:13.5px;height:13.5px;background:#002060;border:1px solid #dcdcdc"></div>
<div class="a" style="left:866.5px;top:259.5px;width:13.5px;height:13.5px;background:#7030a0;border:1px solid #dcdcdc"></div>
<div class="a" style="left:700px;top:277px;width:189px;height:1px;background:#e2e2e2"></div>
<svg style="left:707.5px;top:285.7px" width="16" height="16" viewBox="0 0 16 16"><g transform="translate(8,8)"><path d="M-1 -1 L-1 -7.4 A7.4 7.4 0 0 0 -7.4 -1 Z" fill="#9c9c9c"/><path d="M1 -1 L1 -7.4 A7.4 7.4 0 0 1 7.4 -1 Z" fill="#cf8652"/><path d="M-1 1 L-1 7.4 A7.4 7.4 0 0 1 -7.4 1 Z" fill="#c4c4c4"/><path d="M1 1 L1 7.4 A7.4 7.4 0 0 0 7.4 1 Z" fill="#e8c2a6"/></g></svg>
<div class="t" style="left:733px;top:286px">其他轮廓颜色(M)...</div>
<svg style="left:707px;top:312px" width="16" height="15" viewBox="0 0 16 15"><path d="M1.8 13.6 L2.6 11 L8 5.6 L9.6 7.2 L4.2 12.6 Z" fill="none" stroke="#333" stroke-width="1"/><path d="M7.2 3.6 Q6.3 4.5 7.2 5.4 L10 8.2 Q10.9 9.1 11.8 8.2 Q12.7 7.3 11.8 6.4 L9 3.6 Q8.1 2.7 7.2 3.6 Z M10.2 4.8 L12.6 2.4 Q13.5 1.5 14.3 2.3 Q15.1 3.1 14.2 4 L11.8 6.4" fill="#fff" stroke="#333" stroke-width="1"/></svg>
<div class="t" style="left:732px;top:312px">取色器(E)</div>
<div class="a" style="left:700px;top:334px;width:189px;height:27px;background:#e3e3e3"></div><div class="a" style="left:703px;top:335px;width:185px;height:25px;border:3px solid #f5302f"></div>
<svg style="left:709px;top:342px" width="15" height="11" viewBox="0 0 15 11"><rect x="0" y="0" width="14" height="1.4" rx="0.7" fill="#222"/><rect x="0" y="3" width="14" height="2" rx="1" fill="#222"/><rect x="0" y="7.3" width="14" height="2.8" rx="1.4" fill="#222"/></svg>
<div class="t" style="left:733px;top:340.5px">线型(W)</div>
<svg style="left:877px;top:344px" width="4" height="6"><path d="M0 0 L4 3 L0 6Z" fill="#888"/></svg>
<svg style="left:708px;top:366px" width="16" height="15" viewBox="0 0 16 15"><rect x="0.8" y="1.2" width="13.8" height="12.5" rx="1.3" fill="none" stroke="#333" stroke-width="1.2"/><path d="M2.3 4.3 L4.8 4.3 M6.3 4.3 L8.8 4.3 M10.3 4.3 L12.8 4.3 M2.3 7.4 L4.8 7.4 M6.6 7.4 L9.4 7.4 M11 7.4 L12.8 7.4" stroke="#999" stroke-width="1"/><path d="M2.3 10.4 L12.8 10.4" stroke="#999" stroke-width="1"/></svg>
<div class="t" style="left:732px;top:368px">虚线线型(S)</div>
<svg style="left:877px;top:371px" width="4" height="6"><path d="M0 0 L4 3 L0 6Z" fill="#888"/></svg>
<svg style="left:708px;top:392px" width="16" height="16" viewBox="0 0 16 16"><path d="M1 3.3 L12.8 3.3 M10.4 0.9 L12.8 3.3 L10.4 5.7 M12.8 8.5 L1 8.5 M3.4 6.1 L1 8.5 L3.4 10.9 M1 13.6 L12.8 13.6 M10.4 11.2 L12.8 13.6 L10.4 16" fill="none" stroke="#333" stroke-width="1.2"/></svg>
<div class="t" style="left:732.5px;top:395px">箭头样式(R)</div>
<svg style="left:877px;top:398px" width="4" height="6"><path d="M0 0 L4 3 L0 6Z" fill="#888"/></svg>
<div class="a" style="left:733px;top:416px;width:155px;height:1px;background:#e2e2e2"></div>
<div class="t" style="left:732.5px;top:424px">更多设置(O)...</div>
<div class="a" style="left:888px;top:334.5px;width:182px;height:230px;border:1px solid #d6d6d6;background:#fff;box-shadow:1px 1px 4px rgba(0,0,0,0.12)"></div>
<div class="a" style="left:892px;top:439px;width:176px;height:23px;border:3px solid #f5302f;background:#fff"></div>
<div class="a" style="left:895.5px;top:442px;width:164px;height:15.5px;background:#bfbfbf"></div>
<div class="t" style="left:854px;top:343px;width:100px;text-align:right">0.25<span style="display:inline-block;width:5px"></span>磅</div>
<div class="a" style="left:966px;top:348px;width:92px;height:1px;background:#000"></div>
<div class="t" style="left:854px;top:363px;width:100px;text-align:right">0.5<span style="display:inline-block;width:5px"></span>磅</div>
<div class="a" style="left:966px;top:368px;width:92px;height:1px;background:#000"></div>
<div class="t" style="left:854px;top:383px;width:100px;text-align:right">0.75<span style="display:inline-block;width:5px"></span>磅</div>
<div class="a" style="left:966px;top:388px;width:92px;height:1px;background:#000"></div>
<div class="t" style="left:854px;top:403px;width:100px;text-align:right">1<span style="display:inline-block;width:5px"></span>磅</div>
<div class="a" style="left:966px;top:407px;width:92px;height:2px;background:#000"></div>
<div class="t" style="left:854px;top:423px;width:100px;text-align:right">1.5<span style="display:inline-block;width:5px"></span>磅</div>
<div class="a" style="left:966px;top:427px;width:92px;height:2px;background:#000"></div>
<div class="t" style="left:854px;top:443px;width:100px;text-align:right">2.25<span style="display:inline-block;width:5px"></span>磅</div>
<div class="a" style="left:966px;top:447px;width:92px;height:3px;background:#000"></div>
<div class="t" style="left:854px;top:463px;width:100px;text-align:right">3<span style="display:inline-block;width:5px"></span>磅</div>
<div class="a" style="left:966px;top:466px;width:92px;height:4px;background:#000"></div>
<div class="t" style="left:854px;top:483px;width:100px;text-align:right">4.5<span style="display:inline-block;width:5px"></span>磅</div>
<div class="a" style="left:966px;top:485px;width:92px;height:6px;background:#000"></div>
<div class="t" style="left:854px;top:503px;width:100px;text-align:right">6<span style="display:inline-block;width:5px"></span>磅</div>
<div class="a" style="left:966px;top:504px;width:92px;height:8px;background:#000"></div>
<div class="a" style="left:890px;top:524px;width:178px;height:1px;background:#e0e0e0"></div>
<div class="t" style="left:922px;top:533px">其他线条(M)...</div>
</body></html>
